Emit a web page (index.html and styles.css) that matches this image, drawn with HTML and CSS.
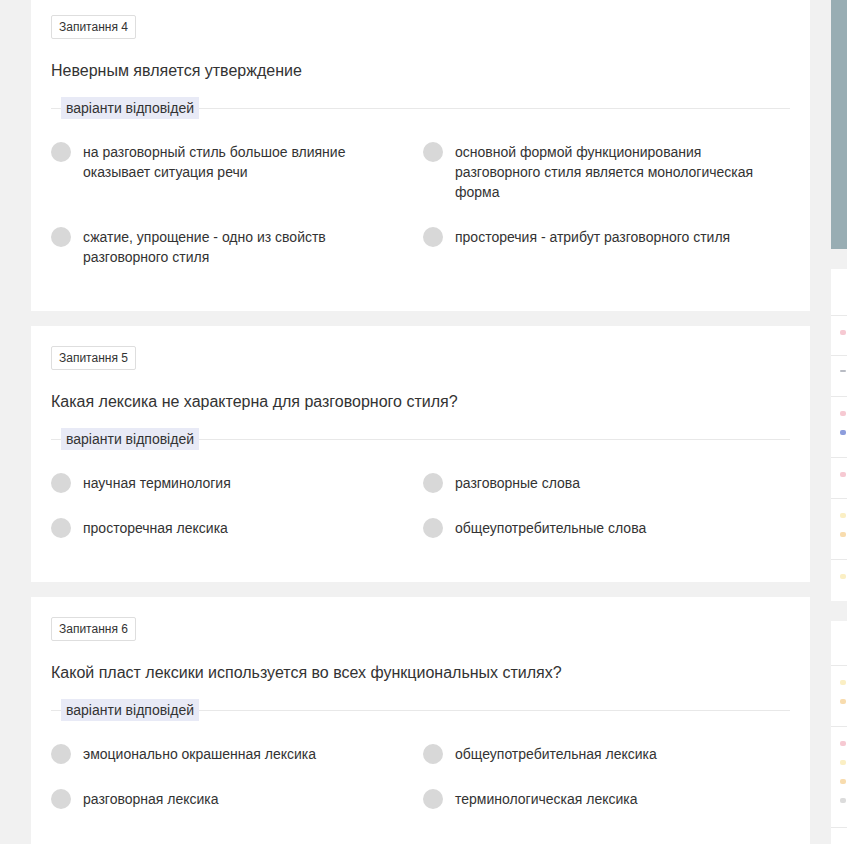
FILE: index.html
```html
<!DOCTYPE html>
<html lang="uk">
<head>
<meta charset="utf-8">
<title>Тест</title>
<link rel="stylesheet" href="styles.css">
</head>
<body>
<div class="page">
  <main class="main">
    <section class="card">
      <div class="badge">Запитання 4</div>
      <h2 class="question">Неверным является утверждение</h2>
      <div class="legend-row"><span class="legend">варіанти відповідей</span></div>
      <div class="options">
        <label class="option"><span class="radio"></span><span class="otext">на разговорный стиль большое влияние оказывает ситуация речи</span></label>
        <label class="option"><span class="radio"></span><span class="otext">основной формой функционирования разговорного стиля является монологическая форма</span></label>
        <label class="option"><span class="radio"></span><span class="otext">сжатие, упрощение - одно из свойств разговорного стиля</span></label>
        <label class="option"><span class="radio"></span><span class="otext">просторечия - атрибут разговорного стиля</span></label>
      </div>
    </section>
    <section class="card">
      <div class="badge">Запитання 5</div>
      <h2 class="question">Какая лексика не характерна для разговорного стиля?</h2>
      <div class="legend-row"><span class="legend">варіанти відповідей</span></div>
      <div class="options">
        <label class="option"><span class="radio"></span><span class="otext">научная терминология</span></label>
        <label class="option"><span class="radio"></span><span class="otext">разговорные слова</span></label>
        <label class="option"><span class="radio"></span><span class="otext">просторечная лексика</span></label>
        <label class="option"><span class="radio"></span><span class="otext">общеупотребительные слова</span></label>
      </div>
    </section>
    <section class="card">
      <div class="badge">Запитання 6</div>
      <h2 class="question">Какой пласт лексики используется во всех функциональных стилях?</h2>
      <div class="legend-row"><span class="legend">варіанти відповідей</span></div>
      <div class="options">
        <label class="option"><span class="radio"></span><span class="otext">эмоционально окрашенная лексика</span></label>
        <label class="option"><span class="radio"></span><span class="otext">общеупотребительная лексика</span></label>
        <label class="option"><span class="radio"></span><span class="otext">разговорная лексика</span></label>
        <label class="option"><span class="radio"></span><span class="otext">терминологическая лексика</span></label>
      </div>
    </section>
  </main>
  <aside class="side">
    <div class="side-banner"></div>
    <div class="side-panel">
      <div class="srow h47"></div>
      <div class="srow h40"><span class="mark red"></span></div>
      <div class="srow h41"><span class="mark dark"></span></div>
      <div class="srow h61"><span class="mark red"></span><span class="mark blue"></span></div>
      <div class="srow h41"><span class="mark red"></span></div>
      <div class="srow h61"><span class="mark yellow"></span><span class="mark orange"></span></div>
      <div class="srow h41 last"><span class="mark yellow"></span></div>
    </div>
    <div class="side-panel">
      <div class="srow h45"></div>
      <div class="srow h61"><span class="mark yellow"></span><span class="mark orange"></span></div>
      <div class="srow h101"><span class="mark red"></span><span class="mark yellow"></span><span class="mark orange"></span><span class="mark grey"></span></div>
      <div class="srow h41 last"></div>
    </div>
  </aside>
</div>
</body>
</html>
```
FILE: styles.css
```css
html, body {
  margin: 0;
  padding: 0;
  overflow: hidden;
  background: #f1f1f1;
  font-family: "Liberation Sans", Arial, sans-serif;
  color: #333;
}
.page {
  display: flex;
  align-items: flex-start;
  gap: 21px;
  padding-left: 31px;
  margin-top: -5px;
}
.main {
  width: 779px;
  flex: none;
  display: flex;
  flex-direction: column;
  gap: 15px;
}
.card {
  background: #fff;
  padding: 20px 20px 44px 20px;
}
.badge {
  display: inline-block;
  height: 24px;
  line-height: 22px;
  box-sizing: border-box;
  border: 1px solid #dedede;
  border-radius: 2px;
  padding: 0 7px;
  font-size: 12px;
  color: #333;
}
.question {
  margin: 21px 0 0 0;
  font-size: 16px;
  line-height: 22px;
  font-weight: normal;
  color: #333;
}
.legend-row {
  display: flex;
  align-items: center;
  margin-top: 15px;
}
.legend-row::before {
  content: "";
  width: 10px;
  border-top: 1px solid #e8e8e8;
}
.legend-row::after {
  content: "";
  flex: 1;
  border-top: 1px solid #e8e8e8;
}
.legend {
  background: #e8eaf6;
  padding: 0 5px;
  font-size: 14px;
  line-height: 22px;
  color: #333;
}
.options {
  display: grid;
  grid-template-columns: 372px 1fr;
  row-gap: 25px;
  margin-top: 23px;
}
.option {
  display: flex;
  align-items: flex-start;
  gap: 12px;
  padding-right: 20px;
}
.radio {
  flex: none;
  width: 20px;
  height: 20px;
  border-radius: 50%;
  background: #d8d8d8;
}
.otext {
  font-size: 14px;
  line-height: 20px;
  color: #333;
  max-width: 320px;
}
.side {
  flex: 1;
  min-width: 0;
  overflow: hidden;
  display: flex;
  flex-direction: column;
  gap: 20px;
}
.side-banner {
  height: 254px;
  background: #98adb3;
}
.side-panel {
  background: #fff;
}
.srow {
  border-bottom: 1px solid #e9e9e9;
  box-sizing: border-box;
  padding: 14px 0 0 9px;
  display: flex;
  flex-direction: column;
  gap: 14px;
}
.srow.last { border-bottom: none; }
.h40 { height: 40px; }
.h41 { height: 41px; }
.h45 { height: 45px; }
.h47 { height: 47px; }
.h61 { height: 61px; }
.h101 { height: 101px; }
.mark {
  display: block;
  width: 6px;
  height: 5px;
  border-radius: 2px;
}
.red { background: #f6c9d2; }
.dark { background: #b9bcc4; height: 2px; }
.blue { background: #8d9ddc; }
.yellow { background: #fbefc4; }
.orange { background: #f8dcae; }
.grey { background: #dcdcdc; }
```
